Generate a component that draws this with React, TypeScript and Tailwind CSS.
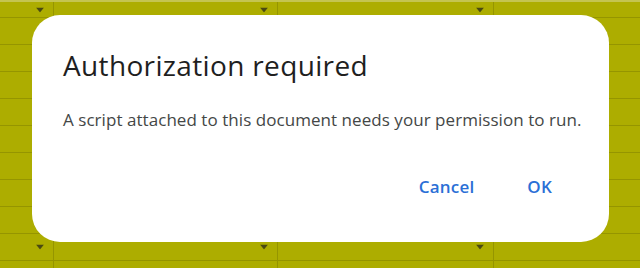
import React from "react";

const widths = [54, 224, 216, 146];

function Tri() {
  return (
    <svg width="8" height="5" viewBox="0 0 8 5" className="absolute right-[9px] top-1/2 -translate-y-1/2">
      <path d="M0 0 H8 L4 5 Z" fill="#4a4a12" />
    </svg>
  );
}

function Row({ h }: { h: number }) {
  return (
    <div className="flex border-b border-[#959500]" style={{ height: h }}>
      {widths.map((w, i) => (
        <div
          key={i}
          className={`relative h-full ${i < 3 ? "border-r border-[#959500]" : ""}`}
          style={{ width: w }}
        >
          {i < 3 && <Tri />}
        </div>
      ))}
    </div>
  );
}

export default function App() {
  const rows = Array.from({ length: 10 });
  return (
    <div
      className="relative w-[640px] h-[268px] overflow-hidden bg-[#adad00]"
      style={{ fontFamily: "'Open Sans', Roboto, sans-serif" }}
    >
      <div className="h-[2px] bg-[#c4c450]" />
      <Row h={16} />
      {rows.map((_, i) => (
        <Row key={i} h={27} />
      ))}

      <div className="absolute left-[32px] top-[15px] w-[577px] h-[227px] rounded-[28px] bg-white pl-[31px] pt-[31px]">
        <div className="text-[28px] leading-[38px] text-[#1f1f1f] font-normal tracking-[0.35px]">Authorization required</div>
        <div className="mt-[24px] text-[17px] leading-[24px] text-[#444746] tracking-[0.05px]">
          A script attached to this document needs your permission to run.
        </div>
        <div className="mt-[43px] flex justify-end pr-[57px] gap-[53px] text-[17px] leading-[24px] font-semibold text-[#2b6fd6] tracking-[0.2px]">
          <span>Cancel</span>
          <span>OK</span>
        </div>
      </div>
    </div>
  );
}
